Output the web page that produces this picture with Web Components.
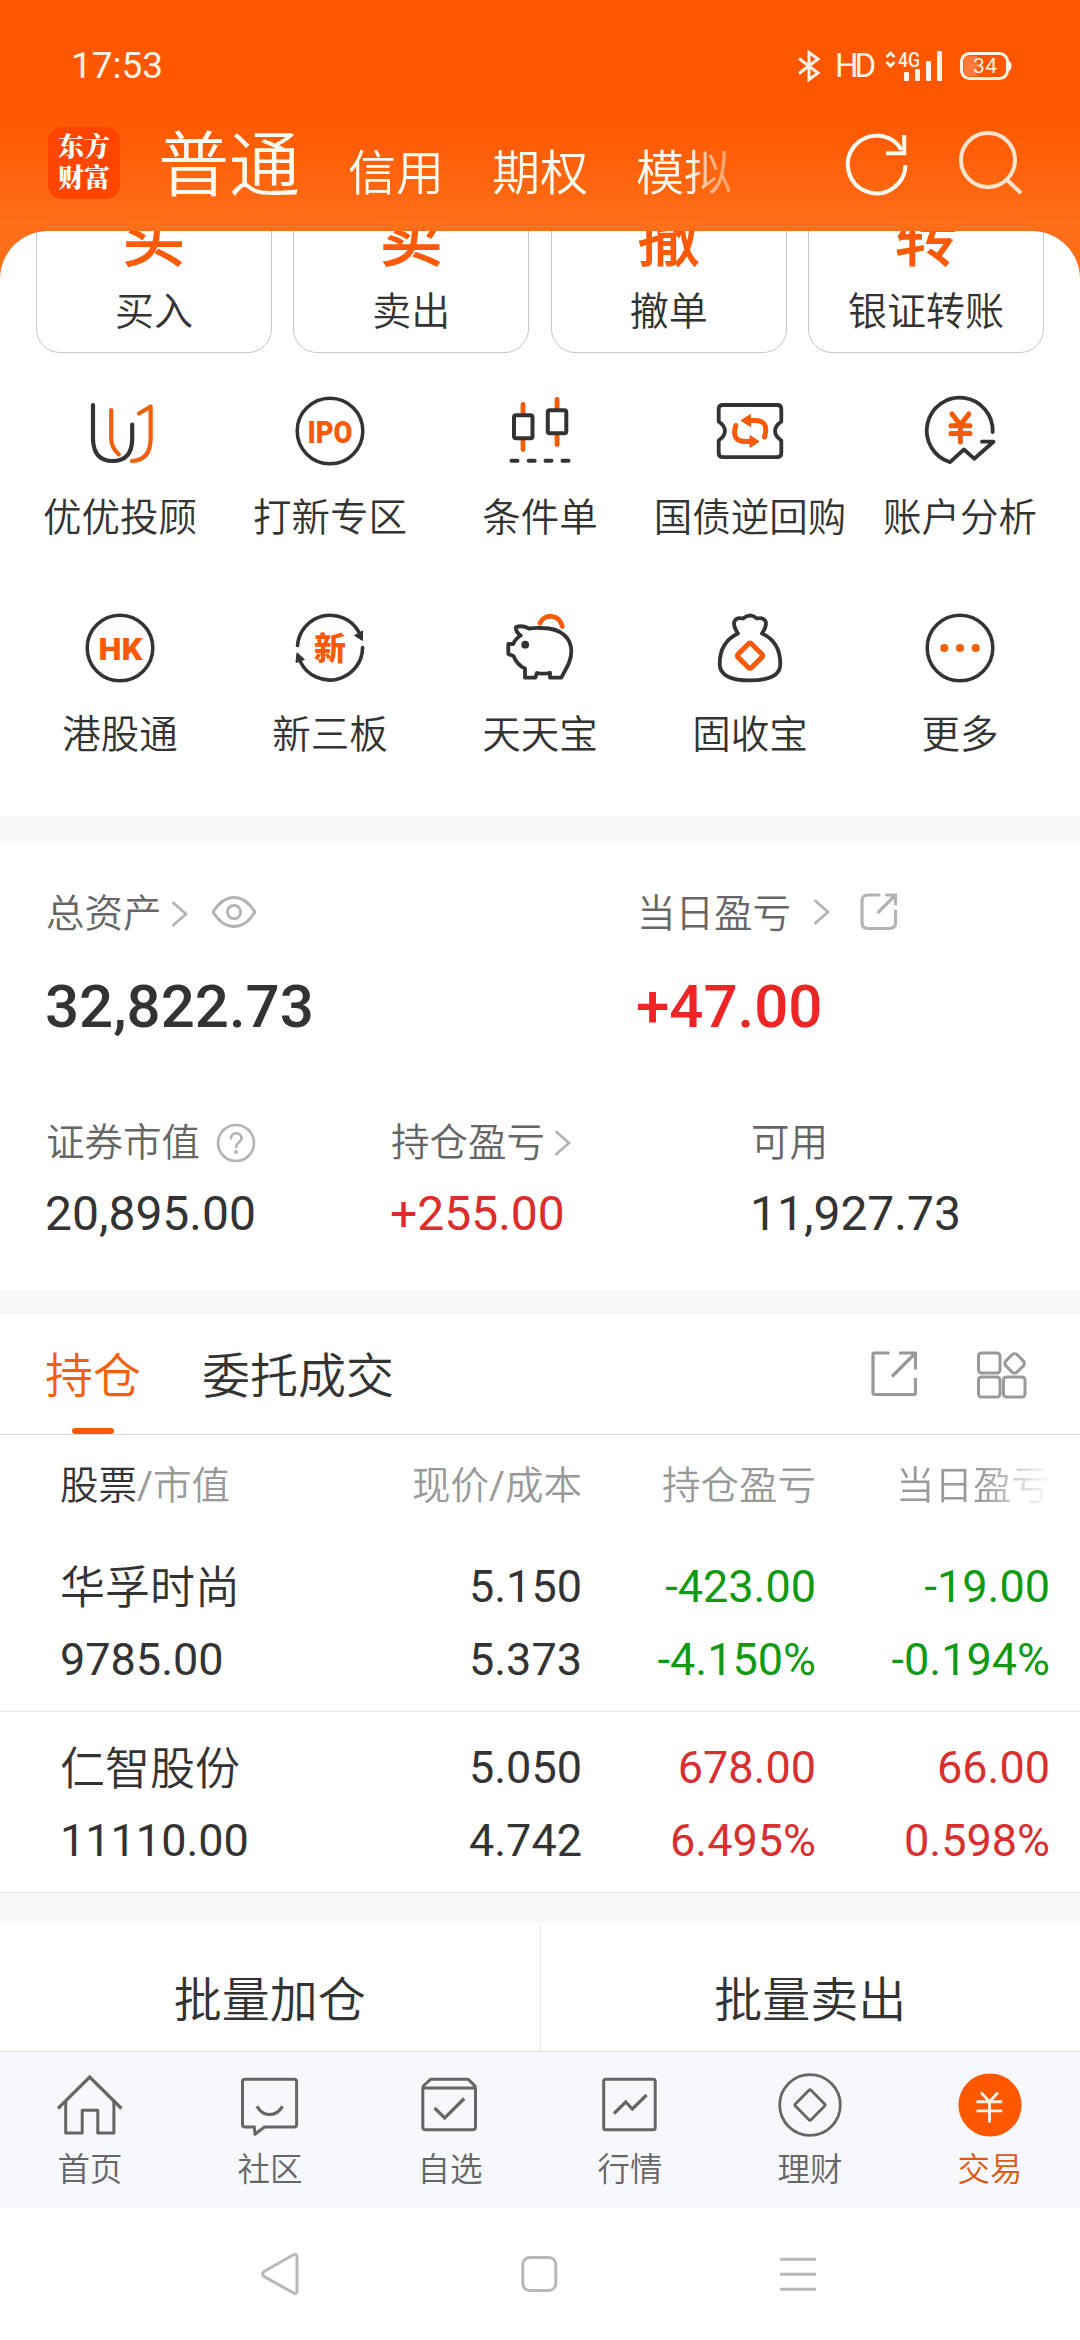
<!DOCTYPE html>
<html lang="zh-CN">
<head>
<meta charset="utf-8">
<title>交易</title>
<style>
  html, body {
    margin: 0;
    width: 1080px;
    height: 2340px;
    overflow: hidden;
    background: #fff;
    font-family: Roboto, "Noto Sans CJK SC DemiLight", "Noto Sans CJK SC", sans-serif;
    color: #333;
  }
</style>
</head>
<body>
<trade-app></trade-app>

<script>
const ICONS = {
  // header
  refresh: ["0 0 72 72", `<g fill="none" stroke="#fff8ee" stroke-width="4"><path d="M64.400 38A28.800 28.800 0 1 1 60.500 23"/><path d="M63.200 8V26.200H45"/></g>`],
  search: ["0 0 72 72", `<g fill="none" stroke="#ffe3cd" stroke-width="4"><circle cx="35" cy="33" r="27"/><path d="M53.500 52.500L68 66"/></g>`],

  // function grid
  advisor: ["0 0 80 80", `<g fill="none" stroke-width="4.200" stroke-linecap="round" stroke-linejoin="round"><path stroke="#333" d="M13 14V49Q14 70 32.600 70Q51.500 70 52.200 49V33.500"/><path stroke="#f2600f" d="M31.200 19V48Q31.500 57 38.800 63.300M59 22.500L70.600 15.500V48Q70.500 69 52 70"/></g>`],
  ipo: ["0 0 80 80", `<circle cx="40" cy="40" r="32.800" fill="none" stroke="#333" stroke-width="3.500"/><text x="17.500" y="51.500" textLength="45" lengthAdjust="spacingAndGlyphs" font-family="Roboto" font-weight="900" font-size="31.500" fill="#fa5a08">IPO</text>`],
  candles: ["0 0 80 80", `<g stroke-linecap="round" stroke-width="4.800" stroke="#fa5a08"><path d="M23 13.500V58.500M57 8.500V53.500"/></g><g fill="#fff" stroke="#333" stroke-width="4"><rect x="14" y="24.300" width="18.500" height="23" rx="2"/><rect x="47.800" y="19.300" width="18.500" height="23" rx="2"/></g><path stroke="#333" stroke-width="4" stroke-linecap="round" d="M11.500 69.700h6M28.700 69.700h6M45.500 69.700h6M62.500 69.700h6"/>`],
  bond: ["0 0 80 80", `<path fill="none" stroke="#333" stroke-width="3.800" stroke-linejoin="round" d="M13 14H67Q71.300 14 71.300 18V30.500Q65 35 65 40T71.300 49.500V62Q71.300 66.200 67 66.200H13Q8.700 66.200 8.700 62V49.500Q15 45 15 40T8.700 30.500V18Q8.700 14 13 14Z"/><g fill="none" stroke="#fa5a08" stroke-width="5" stroke-linecap="round"><path d="M25.800 34.500Q21 50.500 35.500 50.500H41M54.500 46Q59.500 29.500 45 29.500H40"/></g><path fill="#fa5a08" stroke="#fa5a08" stroke-linejoin="round" d="M40 44.500L49 50.500L40 56.500ZM40.500 23.500L31 29.500L40.500 35.500Z"/>`],
  analysis: ["0 0 80 80", `<path fill="none" stroke="#333" stroke-width="3.800" stroke-linejoin="round" stroke-linecap="round" d="M72.700 41A33 33 0 1 0 30 71.200L43.900 58.500L54.200 67.700L73.500 50.700H62"/><path fill="none" stroke="#fa5a08" stroke-width="5" stroke-linecap="round" d="M32 23L40.400 34L48.800 23M40.400 34V51M31 34.700H50M31 42.500H50"/>`],
  hk: ["0 0 80 80", `<circle cx="40" cy="40" r="32.800" fill="none" stroke="#333" stroke-width="3.500"/><text x="18.500" y="51.500" textLength="44" lengthAdjust="spacingAndGlyphs" font-family="Roboto" font-weight="900" font-size="31.500" fill="#fa5a08">HK</text>`],
  neeq: ["0 0 80 80", `<g fill="none" stroke="#333" stroke-width="3.600" stroke-linecap="round"><path d="M7.500 37.500A32.800 32.800 0 0 1 68.500 23.500M72.600 39.500A32.800 32.800 0 0 1 10.500 54"/></g><path fill="#333" stroke="#333" stroke-linejoin="round" d="M64.500 27.500L72.500 23V32.500ZM7 44.700L14.400 51.500L6 54.500Z"/><text x="40" y="51.800" text-anchor="middle" font-family="Noto Sans CJK SC" font-weight="900" font-size="32" fill="#fa5a08">新</text>`],
  piggy: ["0 0 80 80", `<path fill="none" stroke="#333" stroke-width="3.800" stroke-linejoin="round" d="M16 19Q22 17 29 20.500Q36 19.500 42 20C62 20 71.300 31 71.300 43C71.300 54 66 60 61.300 69.700H50V64.700Q44 66.500 37 65L35.300 69.700H25V60.500Q17 57 13.500 48L8.300 46V36H13.300Q15 31 20.700 27.500Q15.500 24 16 19Z"/><circle cx="25.200" cy="36.700" r="3.900" fill="#333"/><path fill="none" stroke="#fa5a08" stroke-width="4.800" stroke-linecap="round" d="M40 15C44 6 59 5 62.200 18.300"/>`],
  moneybag: ["0 0 80 80", `<path fill="none" stroke="#333" stroke-width="3.800" stroke-linejoin="round" d="M28 25.500Q23 18 24.300 13.500Q26.500 9 33 10.500Q40 4.500 47 10.500Q53.500 9 55.700 13.500Q57 18 52 25.500C64 31 70.300 42 70.300 56C70.300 68 58 72.400 40 72.400S9.700 68 9.700 56C9.700 42 16 31 28 25.500Z"/><rect x="30.500" y="38.200" width="19" height="19" rx="2" transform="rotate(45 40 47.700)" fill="none" stroke="#fa5a08" stroke-width="5"/>`],
  more: ["0 0 80 80", `<circle cx="40" cy="40" r="32.800" fill="none" stroke="#333" stroke-width="3.500"/><g fill="#f2600f"><circle cx="24.300" cy="40" r="4.100"/><circle cx="40" cy="40" r="4.100"/><circle cx="55.700" cy="40" r="4.100"/></g>`],

  // asset overview
  chevron: ["0 0 16 26", `<path fill="none" stroke="#b3b3b3" stroke-width="2.800" stroke-linecap="round" d="M1.500 2L14 13L1.500 24"/>`],
  eye: ["0 0 46 34", `<g fill="none" stroke="#b3b3b3" stroke-width="2.800"><path d="M2 17Q11 2.500 23 2.500T44 17Q35 31.500 23 31.500T2 17Z" stroke-linejoin="round"/><circle cx="23" cy="17" r="6.600"/></g>`],
  help: ["0 0 40 40", `<circle cx="20" cy="20" r="18" fill="none" stroke="#b3b3b3" stroke-width="2.600"/><path fill="none" stroke="#b3b3b3" stroke-width="2.600" stroke-linecap="round" d="M15 15.500C15 8.500 25.500 8.500 25.500 15.500C25.500 19 20 19.500 20 24"/><circle cx="20" cy="29" r="2" fill="#b3b3b3"/>`],
  share: ["0 0 38 38", `<path fill="none" stroke="#b3b3b3" stroke-width="3.200" stroke-linecap="round" d="M19 2H8Q2 2 2 8V29.500Q2 35.500 8 35.500H29.500Q35.500 35.500 35.500 29.500V18M18.500 19L35 2.500M26.500 2H35.500V11"/>`],

  // holdings toolbar
  export: ["0 0 46 46", `<path fill="none" stroke="#999" stroke-width="3.200" d="M18.500 2H3.500Q2 2 2 3.500V41.500Q2 43.500 3.500 43.500H43Q44.500 43.500 44.500 42V27M21 25.500L43.500 3M28 2H44.500V18.500"/>`],
  widgets: ["0 0 50 48", `<g fill="none" stroke="#999" stroke-width="3"><rect x="1.500" y="2" width="21.500" height="20" rx="3"/><rect x="1.500" y="26" width="21.500" height="20" rx="3"/><rect x="26.500" y="26" width="21.500" height="20" rx="3"/><rect x="29.700" y="4.500" width="15.800" height="15.800" rx="3.500" transform="rotate(45 37.600 12.400)"/></g>`],

  // bottom tabs
  home: ["0 0 72 72", `<g fill="none" stroke="#666" stroke-width="3"><path d="M4 39.500L35.700 8L67.400 39.500" stroke-width="3.200"/><path stroke-linejoin="round" d="M11.700 32V64H28.200V41.300H43.800V64H59.900V32"/></g>`],
  community: ["0 0 72 72", `<g fill="none" stroke="#666" stroke-width="3" stroke-linejoin="round"><path d="M11 10.300H60Q62.600 10.300 62.600 13V55.500Q62.600 58 60 58H30.500L21 65.300L20.300 58H11Q8.500 58 8.500 55.500V13Q8.500 10.300 11 10.300Z"/><path stroke-width="3.200" d="M23 37.300Q27.500 45.500 35.500 45.500T48.500 37.300"/></g>`],
  watchlist: ["0 0 72 72", `<g fill="none" stroke="#666" stroke-width="3" stroke-linejoin="round"><path d="M8.800 19H61.500V58Q61.500 60.800 58.500 60.800H11.800Q8.800 60.800 8.800 58ZM8.800 19L9.300 17L16.800 10.200H54L61 17L61.500 19"/><path stroke-width="3.200" stroke-linejoin="miter" d="M20.600 39L30.700 49L50.200 29.500"/></g>`],
  market: ["0 0 72 72", `<g fill="none" stroke="#666"><rect x="9.700" y="10.200" width="51.500" height="50.500" rx="2" stroke-width="3"/><path stroke-width="3.200" d="M20 44.500L31.700 33L38.300 40L52.600 26"/></g>`],
  wealth: ["0 0 72 72", `<g fill="none" stroke="#666" stroke-width="2.800"><circle cx="36" cy="36" r="30.300"/><rect x="24.900" y="24.900" width="22.200" height="22.200" rx="1.500" transform="rotate(45 36 36)"/></g>`],
  trade: ["0 0 72 72", `<circle cx="36" cy="36" r="31.600" fill="#ff5600"/><path fill="none" stroke="#fff0e4" stroke-width="2.900" d="M27 23.500L35.500 32.700L44 23.500M35.500 32.700V53.500M22.500 32.700H48.300M22.500 41.900H48.300"/>`],

  // system navigation
  back: ["0 0 40 44", `<path fill="none" stroke="#b8b8b8" stroke-width="3" stroke-linejoin="round" d="M33.500 2.700Q37 1.500 37 5V39Q37 42.500 33.500 41L4 24.500Q1.500 22 4 19.500Z"/>`],
  square: ["0 0 40 40", `<rect x="3.800" y="3.500" width="33" height="33" rx="7" fill="none" stroke="#b8b8b8" stroke-width="3"/>`],
  recent: ["0 0 40 40", `<path stroke="#b8b8b8" stroke-width="3" d="M2 5.300H38M2 20.300H38M2 35.300H38"/>`],
};

class UiIcon extends HTMLElement {
  constructor() {
    super();
    this.attachShadow({ mode: "open" });
  }

  connectedCallback() {
    const [viewBox, body] = ICONS[this.getAttribute("name")];
    const [, , w, h] = viewBox.split(" ");
    this.shadowRoot.innerHTML = `
      <style>
        :host { display: block; flex: none; width: ${w}px; height: ${h}px; }
        svg { display: block; }
      </style>
      <svg width="${w}" height="${h}" viewBox="${viewBox}">${body}</svg>
    `;
  }
}
customElements.define("ui-icon", UiIcon);

class StatusBar extends HTMLElement {
  constructor() {
    super();
    this.attachShadow({ mode: "open" }).innerHTML = `
      <style>
        :host {
          display: flex;
          align-items: center;
          justify-content: space-between;
          box-sizing: border-box;
          height: 115px;
          padding: 17px 68px 0 71px;
          color: #fff3e6;
        }
        .time { font-size: 37px; line-height: 44px; }
        .right { display: flex; align-items: center; }
        svg { display: block; overflow: visible; }
        .hd { width: 37px; font-size: 33px; line-height: 40px; margin: 0 13px 0 14px; letter-spacing: -4px; }
      </style>
      <span class="time">17:53</span>
      <div class="right">
        <svg width="24" height="32" viewBox="0 0 24 32" fill="none" stroke="#fff3e6" stroke-width="3"><path d="M2 8.500L21 23L12 29.500V2.500L21 9L2 23.500"/></svg>
        <span class="hd">HD</span>
        <svg width="58" height="32" viewBox="0 0 58 32">
          <path fill="none" stroke="#fff3e6" stroke-width="2.800" d="M1.500 7L5.500 3L9.500 7M1.500 12L5.500 16L9.500 12"/>
          <text x="13" y="16.500" font-family="Roboto" font-size="20.500" textLength="22" lengthAdjust="spacingAndGlyphs" font-weight="500" fill="#fff3e6">4G</text>
          <g fill="#fff3e6"><rect x="19" y="22" width="5" height="9" rx="1"/><rect x="30" y="19" width="5" height="12" rx="1"/><rect x="41" y="11" width="5" height="20" rx="1"/><rect x="52" y="1" width="5" height="30" rx="1"/></g>
        </svg>
        <svg width="52" height="30" viewBox="0 0 52 30" style="margin-left:17px">
          <rect x="1.500" y="2.500" width="46" height="25" rx="8" fill="none" stroke="#fff3e6" stroke-width="3"/>
          <path fill="#ff7a3a" d="M9 5H17V25H9Q4 25 4 20V10Q4 5 9 5Z"/>
          <path fill="#fff3e6" d="M48 10Q51.500 10 51.500 15T48 20Z"/>
          <text x="13" y="22.300" font-family="Roboto" font-size="21" textLength="24" fill="#fff3e6">34</text>
        </svg>
      </div>
    `;
  }
}
customElements.define("status-bar", StatusBar);

class AccountHeader extends HTMLElement {
  constructor() {
    super();
    this.attachShadow({ mode: "open" }).innerHTML = `
      <style>
        :host {
          display: flex;
          align-items: center;
          box-sizing: border-box;
          height: 116px;
          padding: 0 55px 20px 48px;
          color: #fffaf0;
        }
        .logo {
          width: 72px;
          height: 72px;
          border-radius: 14px;
          background: #ff4500;
          color: #fff;
          font: 900 26px/31px Roboto, "Noto Serif CJK SC", "Noto Sans CJK SC", sans-serif;
          text-align: center;
          display: flex;
          flex-direction: column;
          justify-content: center;
          box-sizing: border-box;
        }
        .kinds {
          display: flex;
          align-items: baseline;
          gap: 48px;
          width: 578px;
          margin-left: 38px;
          padding-top: 14px;
          font-size: 48px;
          line-height: 80px;
          white-space: nowrap;
          -webkit-mask-image: linear-gradient(90deg, #000 92%, rgba(0, 0, 0, .6) 95%, rgba(0, 0, 0, .35));
          mask-image: linear-gradient(90deg, #000 92%, rgba(0, 0, 0, .6) 95%, rgba(0, 0, 0, .35));
        }
        .current { font-size: 71px; padding-bottom: 2px; }
        .tools { display: flex; gap: 40px; margin-left: auto; }
      </style>
      <div class="logo"><span>东方</span><span>财富</span></div>
      <div class="kinds">
        <span class="current">普通</span><span>信用</span><span>期权</span><span>模拟</span>
      </div>
      <div class="tools"><ui-icon name="refresh"></ui-icon><ui-icon name="search"></ui-icon></div>
    `;
  }
}
customElements.define("account-header", AccountHeader);

class QuickCard extends HTMLElement {
  constructor() {
    super();
    this.attachShadow({ mode: "open" });
  }

  connectedCallback() {
    this.shadowRoot.innerHTML = `
      <style>
        :host {
          display: flex;
          flex-direction: column;
          align-items: center;
          justify-content: flex-end;
          flex: none;
          box-sizing: border-box;
          width: 236px;
          height: 183px;
          padding-bottom: 15px;
          border: 1px solid #c6c6c6;
          border-radius: 24px;
        }
        .glyph { font-size: 62px; line-height: 70px; font-weight: 700; color: #fb5a08; margin-bottom: 12px; }
        .label { font-size: 39px; line-height: 50px; }
      </style>
      <span class="glyph">${this.getAttribute("glyph")}</span>
      <span class="label"><slot></slot></span>
    `;
  }
}
customElements.define("quick-card", QuickCard);

class MenuItem extends HTMLElement {
  constructor() {
    super();
    this.attachShadow({ mode: "open" });
  }

  connectedCallback() {
    this.shadowRoot.innerHTML = `
      <style>
        :host {
          display: flex;
          flex-direction: column;
          align-items: center;
          box-sizing: border-box;
          height: 217px;
          padding-top: 38px;
        }
        span { margin-top: 22px; font-size: 38.500px; line-height: 50px; white-space: nowrap; }
      </style>
      <ui-icon name="${this.getAttribute("icon")}"></ui-icon>
      <span><slot></slot></span>
    `;
  }
}
customElements.define("menu-item", MenuItem);

class AssetStat extends HTMLElement {
  constructor() {
    super();
    this.attachShadow({ mode: "open" });
  }

  connectedCallback() {
    this.shadowRoot.innerHTML = `
      <style>
        :host { display: block; color: #333; }
        .label {
          display: flex;
          align-items: center;
          height: 50px;
          font-size: 38.500px;
          line-height: 50px;
          color: #666;
          white-space: nowrap;
        }
        .value { margin: 16px 0 0 -1px; font-size: 48px; line-height: 60px; }
        :host([large]) .value { margin-top: 33px; font-size: 60px; line-height: 70px; font-weight: 500; }
        :host([up]) .value { color: #dc2c2c; }
        :host([large][up]) .value { color: #ee2525; }
      </style>
      <div class="label">${this.getAttribute("label")}<slot></slot></div>
      <div class="value">${this.getAttribute("value")}</div>
    `;
  }
}
customElements.define("asset-stat", AssetStat);

class HoldingRow extends HTMLElement {
  constructor() {
    super();
    this.attachShadow({ mode: "open" });
  }

  connectedCallback() {
    const cells = this.getAttribute("cells").split("|");
    this.shadowRoot.innerHTML = `
      <style>
        :host {
          display: grid;
          grid-template-columns: 1fr 260px 234px 234px;
          box-sizing: border-box;
          height: 181px;
          padding: 19px 30px 0 60px;
          border-bottom: 1px solid #e8e8e8;
          font-size: 45px;
          line-height: 73px;
        }
        div { display: flex; flex-direction: column; text-align: right; }
        .stock { text-align: left; }
        .name { height: 71px; padding-top: 2px; }
        :host([trend="up"]) .pl { color: #d83030; }
        :host([trend="down"]) .pl { color: #0f9a12; }
      </style>
      <div class="stock"><span class="name"><slot></slot></span><span>${cells[0]}</span></div>
      <div><span>${cells[1]}</span><span>${cells[2]}</span></div>
      <div class="pl"><span>${cells[3]}</span><span>${cells[4]}</span></div>
      <div class="pl"><span>${cells[5]}</span><span>${cells[6]}</span></div>
    `;
  }
}
customElements.define("holding-row", HoldingRow);

class NavTab extends HTMLElement {
  constructor() {
    super();
    this.attachShadow({ mode: "open" });
  }

  connectedCallback() {
    this.shadowRoot.innerHTML = `
      <style>
        :host {
          display: flex;
          flex: 1;
          flex-direction: column;
          align-items: center;
          padding-top: 17px;
          font-size: 32.500px;
          line-height: 40px;
          color: #666;
        }
        :host([active]) { color: #dd5a14; }
        span { margin-top: 9px; }
      </style>
      <ui-icon name="${this.getAttribute("icon")}"></ui-icon>
      <span><slot></slot></span>
    `;
  }
}
customElements.define("nav-tab", NavTab);

class TradeApp extends HTMLElement {
  constructor() {
    super();
    this.attachShadow({ mode: "open" }).innerHTML = `
      <style>
        :host {
          display: flex;
          flex-direction: column;
          width: 1080px;
          height: 2340px;
          background: linear-gradient(#ff5600 0, #ff5600 110px, #ff6e18 225px, #ff6e18 400px);
        }
        main {
          display: flex;
          flex-direction: column;
          flex: 1;
          min-height: 0;
          overflow: hidden;
          background: #fff;
          border-radius: 48px 48px 0 0;
        }
        main > * { flex: none; }
        .cards {
          display: flex;
          justify-content: space-between;
          align-items: flex-end;
          height: 122px;
          padding: 0 36px;
        }
        .menu {
          display: grid;
          grid-template-columns: repeat(5, 210px);
          padding: 0 15px 29px;
        }
        .band { height: 25px; background: #f7f8fa; }
        .assets { padding: 48px 46px 46px; }
        .line { display: grid; }
        .line.top { grid-template-columns: 591px 1fr; margin-bottom: 76px; }
        .line.sub { grid-template-columns: 345px 360px 1fr; }
        .tabs {
          display: flex;
          box-sizing: border-box;
          height: 121px;
          padding: 0 53px 0 45px;
          border-bottom: 1px solid #dcdcdc;
          font-size: 48px;
          line-height: 60px;
        }
        .tab { display: flex; flex-direction: column; align-items: center; padding-top: 33px; margin-right: 61px; }
        .tab.on { color: #f2600f; }
        .tab.on::after {
          content: "";
          width: 42px;
          height: 6px;
          margin-top: auto;
          border-radius: 3px;
          background: #fa5a08;
        }
        .tools { display: flex; gap: 60px; margin-left: auto; padding-top: 37px; }
        .thead {
          display: grid;
          grid-template-columns: 1fr 260px 234px 234px;
          box-sizing: border-box;
          height: 96px;
          padding: 26px 30px 0 60px;
          font-size: 38.500px;
          line-height: 50px;
          color: #999;
          text-align: right;
        }
        .thead span:first-child { text-align: left; }
        .thead b { font-weight: 400; color: #333; }
        .thead .cut {
          -webkit-mask-image: linear-gradient(90deg, #000 70%, rgba(0, 0, 0, .12) 96%);
          mask-image: linear-gradient(90deg, #000 70%, rgba(0, 0, 0, .12) 96%);
        }
        .batch { display: flex; height: 152px; font-size: 48px; line-height: 156px; text-align: center; }
        .batch span { flex: 1; box-sizing: border-box; }
        .batch span:first-child { border-right: 1px solid #e8e8e8; }
        .bottom {
          display: flex;
          box-sizing: border-box;
          height: 157px;
          background: #f7f8fb;
          border-top: 1px solid #e2e3e6;
        }
        .system {
          display: flex;
          align-items: center;
          justify-content: space-between;
          box-sizing: border-box;
          height: 132px;
          padding: 0 262px 0 260px;
          background: #fff;
        }
      </style>
      <status-bar></status-bar>
      <account-header></account-header>
      <main>
        <div class="cards">
          <quick-card glyph="买">买入</quick-card>
          <quick-card glyph="卖">卖出</quick-card>
          <quick-card glyph="撤">撤单</quick-card>
          <quick-card glyph="转">银证转账</quick-card>
        </div>
        <div class="menu">
          <menu-item icon="advisor">优优投顾</menu-item>
          <menu-item icon="ipo">打新专区</menu-item>
          <menu-item icon="candles">条件单</menu-item>
          <menu-item icon="bond">国债逆回购</menu-item>
          <menu-item icon="analysis">账户分析</menu-item>
          <menu-item icon="hk">港股通</menu-item>
          <menu-item icon="neeq">新三板</menu-item>
          <menu-item icon="piggy">天天宝</menu-item>
          <menu-item icon="moneybag">固收宝</menu-item>
          <menu-item icon="more">更多</menu-item>
        </div>
        <div class="band"></div>
        <div class="assets">
          <div class="line top">
            <asset-stat large label="总资产" value="32,822.73">
              <ui-icon name="chevron" style="margin-left:10px"></ui-icon>
              <ui-icon name="eye" style="margin:-4px 0 0 23px"></ui-icon>
            </asset-stat>
            <asset-stat large up label="当日盈亏" value="+47.00">
              <ui-icon name="chevron" style="margin:-4px 0 0 23px"></ui-icon>
              <ui-icon name="share" style="margin:-4px 0 0 30px"></ui-icon>
            </asset-stat>
          </div>
          <div class="line sub">
            <asset-stat label="证券市值" value="20,895.00">
              <ui-icon name="help" style="margin-left:16px"></ui-icon>
            </asset-stat>
            <asset-stat up label="持仓盈亏" value="+255.00">
              <ui-icon name="chevron" style="margin-left:10px"></ui-icon>
            </asset-stat>
            <asset-stat label="可用" value="11,927.73"></asset-stat>
          </div>
        </div>
        <div class="band" style="height:24px"></div>
        <div class="tabs">
          <span class="tab on">持仓</span>
          <span class="tab">委托成交</span>
          <div class="tools"><ui-icon name="export"></ui-icon><ui-icon name="widgets"></ui-icon></div>
        </div>
        <div class="thead">
          <span><b>股票</b>/市值</span><span>现价/成本</span><span>持仓盈亏</span><span class="cut">当日盈亏</span>
        </div>
        <holding-row trend="down" cells="9785.00|5.150|5.373|-423.00|-4.150%|-19.00|-0.194%">华孚时尚</holding-row>
        <holding-row trend="up" cells="11110.00|5.050|4.742|678.00|6.495%|66.00|0.598%">仁智股份</holding-row>
        <div class="band" style="height:30px"></div>
        <div class="batch"><span>批量加仓</span><span>批量卖出</span></div>
      </main>
      <div class="bottom">
        <nav-tab icon="home">首页</nav-tab>
        <nav-tab icon="community">社区</nav-tab>
        <nav-tab icon="watchlist">自选</nav-tab>
        <nav-tab icon="market">行情</nav-tab>
        <nav-tab icon="wealth">理财</nav-tab>
        <nav-tab icon="trade" active>交易</nav-tab>
      </div>
      <div class="system">
        <ui-icon name="back"></ui-icon><ui-icon name="square"></ui-icon><ui-icon name="recent"></ui-icon>
      </div>
    `;
  }
}
customElements.define("trade-app", TradeApp);
</script>
</body>
</html>
